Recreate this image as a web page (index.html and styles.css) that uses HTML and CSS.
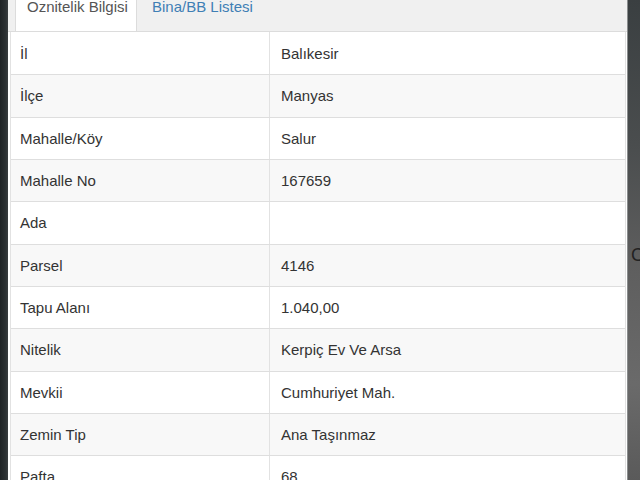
FILE: index.html
```html
<!DOCTYPE html>
<html lang="tr">
<head>
<meta charset="utf-8">
<title>Öznitelik Bilgisi</title>
<link rel="stylesheet" href="styles.css">
</head>
<body>
<div class="screen">
  <div class="edge-left"></div>
  <div class="panel">
    <div class="tabs">
      <div class="tab active">Oznitelik Bilgisi</div>
      <div class="tab">Bina/BB Listesi</div>
    </div>
    <div class="table">
      <div class="row"><div class="key">İl</div><div class="val">Balıkesir</div></div>
      <div class="row striped"><div class="key">İlçe</div><div class="val">Manyas</div></div>
      <div class="row"><div class="key">Mahalle/Köy</div><div class="val">Salur</div></div>
      <div class="row striped"><div class="key">Mahalle No</div><div class="val">167659</div></div>
      <div class="row"><div class="key">Ada</div><div class="val"></div></div>
      <div class="row striped"><div class="key">Parsel</div><div class="val">4146</div></div>
      <div class="row"><div class="key">Tapu Alanı</div><div class="val">1.040,00</div></div>
      <div class="row striped"><div class="key">Nitelik</div><div class="val">Kerpiç Ev Ve Arsa</div></div>
      <div class="row"><div class="key">Mevkii</div><div class="val">Cumhuriyet Mah.</div></div>
      <div class="row striped"><div class="key">Zemin Tip</div><div class="val">Ana Taşınmaz</div></div>
      <div class="row"><div class="key">Pafta</div><div class="val">68</div></div>
    </div>
  </div>
  <div class="edge-right"><span class="edge-glyph">C</span></div>
</div>
</body>
</html>
```

FILE: styles.css
```css
html, body {
  margin: 0;
  padding: 0;
  background: #272b2d;
}
.screen {
  display: flex;
  width: 640px;
  height: 480px;
  overflow: hidden;
  font-family: "Liberation Sans", Arial, sans-serif;
  font-size: 15px;
  color: #333;
}
.edge-left {
  width: 8px;
  flex: none;
  background: linear-gradient(90deg, #1f2325 0, #2c3133 70%, #3a3e40 100%);
}
.panel {
  width: 619px;
  flex: none;
  background: #fff;
  display: flex;
  flex-direction: column;
}
.edge-right {
  flex: 1;
  position: relative;
  background: linear-gradient(180deg, #3a3f41 0, #4a4d4e 30%, #5e5e5e 55%, #6a6a6a 80%, #5a5a5a 100%);
  border-left: 1px solid #8a8d8e;
}
.edge-glyph {
  position: absolute;
  left: 3px;
  top: 245px;
  font-size: 18px;
  color: #222;
}
.tabs {
  height: 31px;
  flex: none;
  display: flex;
  align-items: flex-end;
  background: #f0f0f0;
  border-bottom: 1px solid #dcdcdc;
  overflow: hidden;
  padding-left: 7px;
}
.tab {
  height: 40px;
  box-sizing: border-box;
  padding: 0 12px 15px 15px;
  line-height: 20px;
  white-space: nowrap;
  display: flex;
  align-items: flex-end;
  color: #3f7fb5;
  margin-bottom: -1px;
}
.tab.active {
  width: 122px;
  padding-left: 11px;
  padding-right: 0;
  background: #fff;
  color: #555;
  border: 1px solid #dcdcdc;
  border-bottom: 1px solid #fff;
  height: 41px;
  padding-bottom: 14px;
}
.table {
  margin: 0 1px 0 2px;
  border-left: 1px solid #e2e2e2;
  border-right: 1px solid #e2e2e2;
}
.row {
  display: flex;
  height: 42.33px;
  box-sizing: border-box;
  border-top: 1px solid #dedede;
  align-items: stretch;
}
.row:first-child {
  border-top: none;
}
.row.striped {
  background: #f8f8f8;
}
.key {
  width: 259px;
  flex: none;
  box-sizing: border-box;
  padding-left: 9px;
  border-right: 1px solid #e2e2e2;
  display: flex;
  align-items: center;
}
.val {
  flex: 1;
  padding-left: 11px;
  display: flex;
  align-items: center;
}
```
